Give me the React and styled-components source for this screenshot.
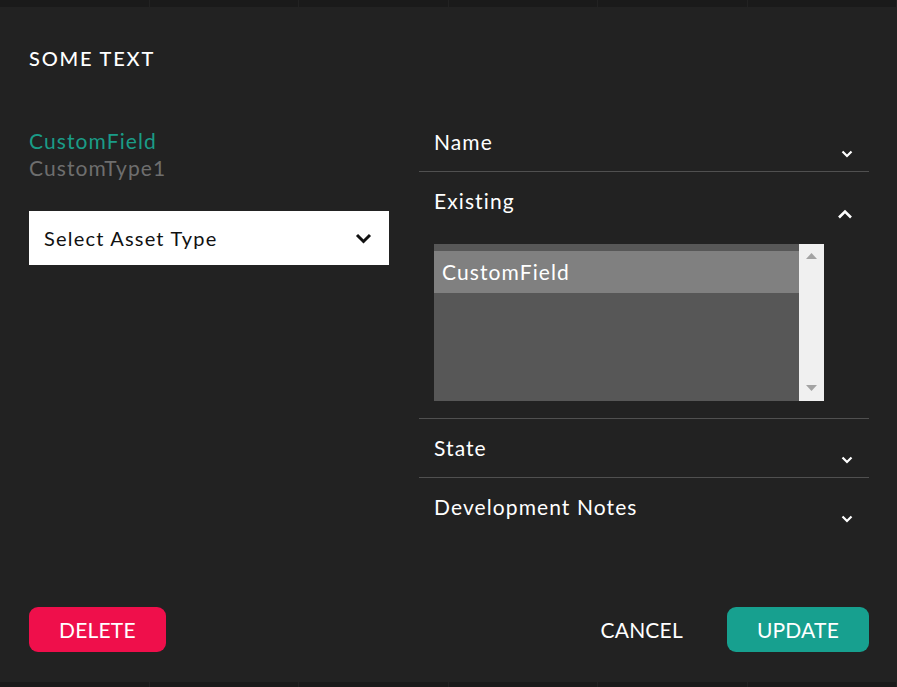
import React from 'react';
import styled, { createGlobalStyle } from 'styled-components';

const GlobalStyle = createGlobalStyle`
  html, body {
    margin: 0;
    padding: 0;
    background: #1a1a1a;
    font-family: Lato, "Open Sans", sans-serif;
  }
  * { box-sizing: border-box; }
`;

const Page = styled.div`
  width: 897px;
  height: 687px;
  display: flex;
  flex-direction: column;
  overflow: hidden;
`;

const Strip = styled.div`
  height: ${p => p.h}px;
  display: flex;
  flex-shrink: 0;
  background: #1a1a1a;
`;

const StripCell = styled.div`
  flex: 1;
  border-right: 1px solid #222;
`;

const Modal = styled.div`
  flex: 1;
  background: #222;
  display: flex;
  flex-direction: column;
  padding: 39px 28px 30px 29px;
  color: #fff;
`;

const Title = styled.h2`
  margin: 0;
  font-size: 20px;
  line-height: 24px;
  font-weight: 500;
  letter-spacing: 1.8px;
  text-transform: uppercase;
`;

const Body = styled.div`
  margin-top: 43px;
  display: flex;
  justify-content: space-between;
`;

const LeftCol = styled.div`
  width: 360px;
  padding-top: 14px;
`;

const FieldName = styled.div`
  font-size: 21px;
  line-height: 27px;
  letter-spacing: 1.1px;
  color: ${p => (p.muted ? '#6e6e6e' : '#1a9c87')};
`;

const SelectBox = styled.div`
  margin-top: 30px;
  height: 54px;
  background: #fff;
  color: #111;
  display: flex;
  align-items: center;
  justify-content: space-between;
  padding: 0 17px 0 15px;
  font-size: 20px;
  letter-spacing: 1.2px;
`;

const RightCol = styled.div`
  width: 450px;
`;

const Section = styled.div`
  border-bottom: ${p => (p.last ? 'none' : '1px solid #505050')};
`;

const SectionHead = styled.div`
  height: 58px;
  display: flex;
  justify-content: space-between;
  padding: 16px 16px 0 15px;
`;

const SectionTitle = styled.div`
  font-size: 21px;
  line-height: 26px;
  letter-spacing: 1.1px;
  color: #fff;
`;

const Chevron = styled.svg`
  margin-top: ${p => p.top}px;
  flex-shrink: 0;
`;

const SectionBody = styled.div`
  padding: 14px 45px 17px 15px;
`;

const ListBox = styled.div`
  height: 157px;
  display: flex;
  background: #575757;
`;

const ListItems = styled.div`
  flex: 1;
  padding-top: 7px;
`;

const ListItem = styled.div`
  height: 42px;
  line-height: 42px;
  padding-left: 8px;
  font-size: 21px;
  letter-spacing: 1.1px;
  color: #fff;
  background: ${p => (p.selected ? '#808080' : 'transparent')};
`;

const ScrollBar = styled.div`
  width: 25px;
  background: #f0f0f0;
  display: flex;
  flex-direction: column;
  justify-content: space-between;
  align-items: center;
  padding: 9px 0 10px;
`;

const Footer = styled.div`
  margin-top: auto;
  display: flex;
  align-items: center;
  justify-content: space-between;
`;

const Actions = styled.div`
  display: flex;
  align-items: center;
  gap: 14px;
`;

const Button = styled.button`
  height: 45px;
  padding: 0 30px;
  border: none;
  border-radius: 9px;
  font-family: Lato, "Open Sans", sans-serif;
  font-size: 21px;
  letter-spacing: 0.2px;
  text-transform: uppercase;
  color: #fff;
  cursor: pointer;
  background: ${p =>
    p.variant === 'danger' ? '#ef0f4b' : p.variant === 'primary' ? '#17a08f' : 'transparent'};
`;

const ChevronDown = () => (
  <Chevron width={12} height={8} viewBox="0 0 12 8" top={21}>
    <polyline points="1.5,1.5 6,6 10.5,1.5" fill="none" stroke="#fff" strokeWidth="2.2" />
  </Chevron>
);

const ChevronUp = () => (
  <Chevron width={16} height={10} viewBox="0 0 16 10" top={21}>
    <polyline points="2,8.5 8,2.5 14,8.5" fill="none" stroke="#fff" strokeWidth="2.6" />
  </Chevron>
);

const Triangle = ({ up }) => (
  <svg width="11" height="6" viewBox="0 0 11 6">
    <polygon points={up ? '0,6 5.5,0 11,6' : '0,0 5.5,6 11,0'} fill="#a3a3a3" />
  </svg>
);

const sections = [
  { title: 'Name' },
  { title: 'Existing', open: true },
  { title: 'State' },
  { title: 'Development Notes', last: true }
];

const App = () => (
  <Page>
    <GlobalStyle />
    <Strip h={7}>
      {[0, 1, 2, 3, 4, 5].map(i => (
        <StripCell key={i} />
      ))}
    </Strip>
    <Modal>
      <Title>Some Text</Title>
      <Body>
        <LeftCol>
          <FieldName>CustomField</FieldName>
          <FieldName muted>CustomType1</FieldName>
          <SelectBox>
            <span>Select Asset Type</span>
            <svg width="17" height="11" viewBox="0 0 17 11">
              <polyline points="2,2 8.5,8.5 15,2" fill="none" stroke="#111" strokeWidth="3" />
            </svg>
          </SelectBox>
        </LeftCol>
        <RightCol>
          {sections.map(s => (
            <Section key={s.title} last={s.last}>
              <SectionHead>
                <SectionTitle>{s.title}</SectionTitle>
                {s.open ? <ChevronUp /> : <ChevronDown />}
              </SectionHead>
              {s.open && (
                <SectionBody>
                  <ListBox>
                    <ListItems>
                      <ListItem selected>CustomField</ListItem>
                    </ListItems>
                    <ScrollBar>
                      <Triangle up />
                      <Triangle />
                    </ScrollBar>
                  </ListBox>
                </SectionBody>
              )}
            </Section>
          ))}
        </RightCol>
      </Body>
      <Footer>
        <Button variant="danger">Delete</Button>
        <Actions>
          <Button>Cancel</Button>
          <Button variant="primary">Update</Button>
        </Actions>
      </Footer>
    </Modal>
    <Strip h={5}>
      {[0, 1, 2, 3, 4, 5].map(i => (
        <StripCell key={i} />
      ))}
    </Strip>
  </Page>
);

export default App;
